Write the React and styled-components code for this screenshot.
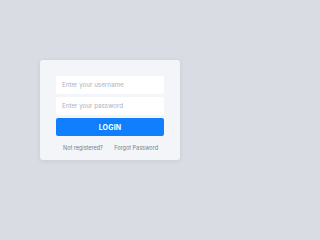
import React from "react";
import styled, { createGlobalStyle } from "styled-components";

const GlobalStyle = createGlobalStyle`
  html, body {
    margin: 0;
    padding: 0;
    background: #d9dde3;
  }
  * {
    box-sizing: border-box;
  }
`;

const Page = styled.div`
  width: 220px;
  height: 220px;
  display: flex;
  align-items: center;
  justify-content: center;
  font-family: Inter, "Noto Sans", sans-serif;
`;

const Card = styled.form`
  width: 140px;
  height: 100px;
  background: #f3f5f8;
  border-radius: 3px;
  box-shadow: 0 1px 4px rgba(40, 50, 70, 0.1);
  padding: 16px 16px 0;
  display: flex;
  flex-direction: column;
  gap: 3px;
`;

const Input = styled.input`
  width: 100%;
  height: 18px;
  border: none;
  border-radius: 2px;
  background: #ffffff;
  padding: 0 6px;
  font-family: inherit;
  font-size: 6.25px;
  color: #333;
  outline: none;
  &::placeholder {
    color: #aab2bd;
  }
`;

const Button = styled.button`
  width: 100%;
  height: 18px;
  border: none;
  border-radius: 2px;
  background: #0f7ffd;
  color: #ffffff;
  font-family: inherit;
  font-weight: 700;
  font-size: 7px;
  letter-spacing: 0.2px;
  padding: 0;
`;

const Links = styled.div`
  display: flex;
  justify-content: space-between;
  padding: 0 6px 0 7px;
  margin-top: 6px;
`;

const Link = styled.a`
  font-size: 5.5px;
  color: #75818f;
  text-decoration: none;
`;

export default function App() {
  return (
    <Page>
      <GlobalStyle />
      <Card onSubmit={e => e.preventDefault()}>
        <Input placeholder="Enter your username" />
        <Input type="password" placeholder="Enter your password" />
        <Button type="submit">LOGIN</Button>
        <Links>
          <Link href="#">Not registered?</Link>
          <Link href="#">Forgot Password</Link>
        </Links>
      </Card>
    </Page>
  );
}
